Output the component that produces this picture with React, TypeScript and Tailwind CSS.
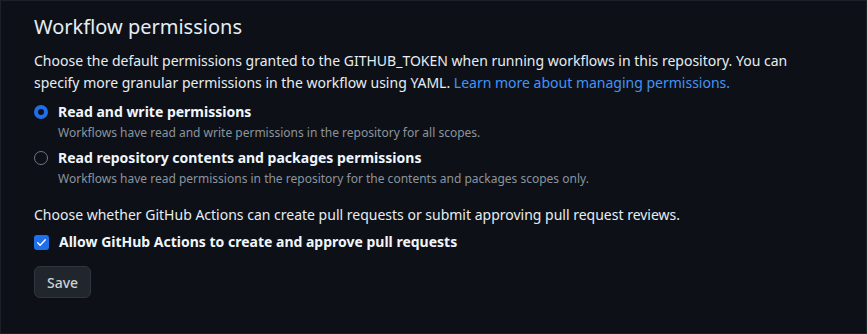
import React from "react";

export default function App() {
  return (
    <div
      className="w-[867px] h-[334px] bg-[#0d1117] border border-[#1b2029] text-[#e6edf3] overflow-hidden"
      style={{ fontFamily: '"Noto Sans", sans-serif' }}
    >
      <div className="pl-[33px] pr-[36px] pt-[11px]">
        <h2 className="text-[20px] leading-[30px] font-normal text-[#e6edf3]">Workflow permissions</h2>
        <p className="mt-[8px] text-[14px] leading-[22px] text-[#e6edf3]">
          Choose the default permissions granted to the GITHUB_TOKEN when running workflows in this repository. You can
          specify more granular permissions in the workflow using YAML.{" "}
          <a className="text-[#4493f8]">Learn more about managing permissions.</a>
        </p>
        <div className="mt-[8px] flex flex-col gap-[4px]">
          <label className="flex items-start gap-[10px]">
            <span className="mt-[3px] w-[14px] h-[14px] rounded-full border-[4px] border-[#1f6feb] bg-[#0d1117] shrink-0" />
            <span className="flex flex-col">
              <span className="text-[14px] leading-[20px] font-bold text-[#f0f6fc]">Read and write permissions</span>
              <span className="text-[12px] leading-[22px] text-[#8b949e]">
                Workflows have read and write permissions in the repository for all scopes.
              </span>
            </span>
          </label>
          <label className="flex items-start gap-[10px]">
            <span className="mt-[3px] w-[14px] h-[14px] rounded-full border border-[#6e7681] shrink-0" />
            <span className="flex flex-col">
              <span className="text-[14px] leading-[20px] font-bold text-[#f0f6fc]">
                Read repository contents and packages permissions
              </span>
              <span className="text-[12px] leading-[22px] text-[#8b949e]">
                Workflows have read permissions in the repository for the contents and packages scopes only.
              </span>
            </span>
          </label>
        </div>
        <p className="mt-[14px] text-[14px] leading-[22px] text-[#e6edf3]">
          Choose whether GitHub Actions can create pull requests or submit approving pull request reviews.
        </p>
        <label className="mt-[6px] flex items-center gap-[10px]">
          <span className="w-[15px] h-[15px] rounded-[3px] bg-[#1f6feb] flex items-center justify-center shrink-0">
            <svg width="11" height="11" viewBox="0 0 16 16" fill="none">
              <path d="M2.5 8.5 L6 12 L13.5 4" stroke="white" strokeWidth="2" strokeLinecap="round" strokeLinejoin="round" />
            </svg>
          </span>
          <span className="text-[14px] leading-[20px] font-bold text-[#f0f6fc]">
            Allow GitHub Actions to create and approve pull requests
          </span>
        </label>
        <button className="mt-[14px] h-[32px] px-[12px] rounded-[6px] bg-[#21262d] border border-[#30363d] text-[14px] font-medium text-[#c9d1d9]">
          Save
        </button>
      </div>
    </div>
  );
}
